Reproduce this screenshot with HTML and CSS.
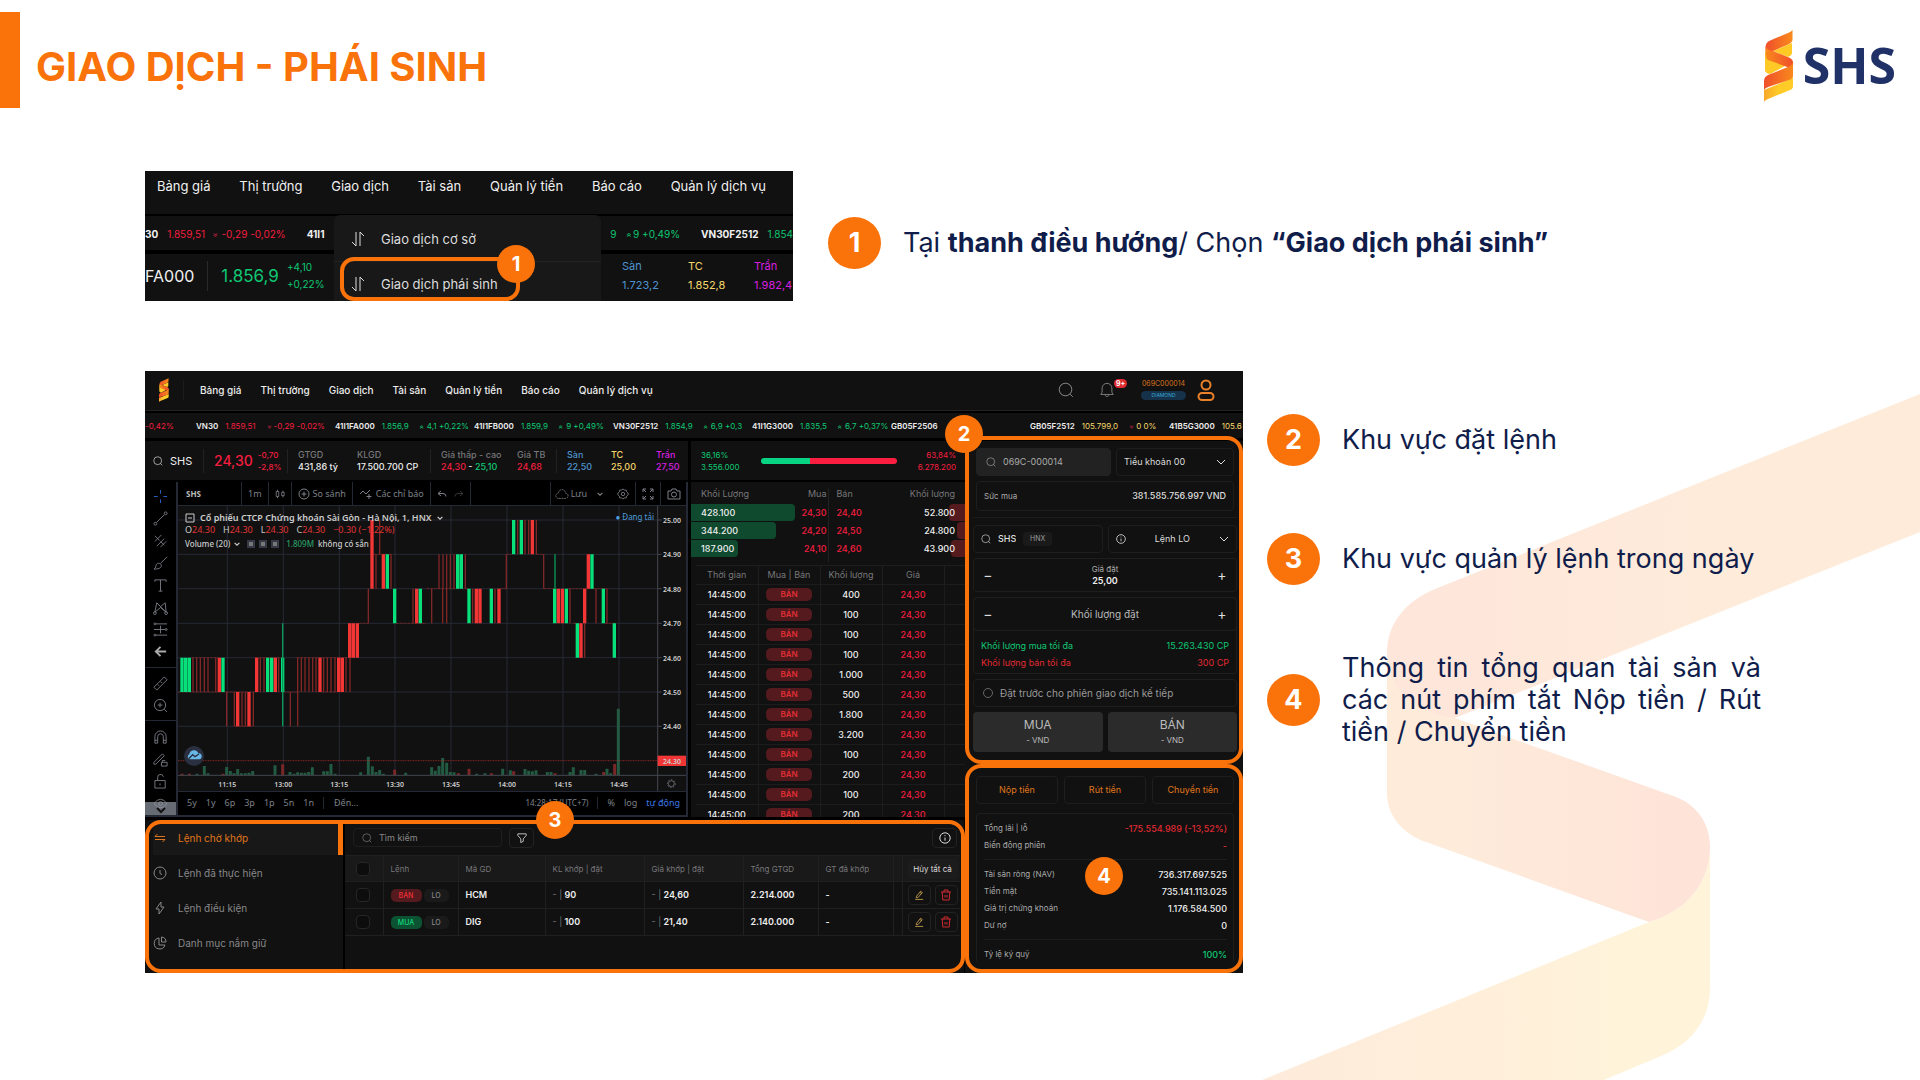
FILE: index.html
```html
<!DOCTYPE html>
<html lang="vi">
<head>
<meta charset="utf-8">
<meta name="viewport" content="width=device-width, initial-scale=1">
<title>Giao dịch - Phái sinh</title>
<link rel="stylesheet" href="styles.css">
</head>
<body>
<svg class="defs" aria-hidden="true">
  <linearGradient id="gA" x1="0" x2="1"><stop offset="0" stop-color="#f04e2b"/><stop offset="1" stop-color="#f98a1c"/></linearGradient>
  <linearGradient id="gB" x1="0" x2="1"><stop offset="0" stop-color="#f98a1c"/><stop offset="1" stop-color="#f04e2b"/></linearGradient>
  <linearGradient id="gC" x1="0" x2="1"><stop offset="0" stop-color="#f8a72a"/><stop offset=".5" stop-color="#ffcb26"/></linearGradient>
  <symbol id="ribbon" viewBox="0 0 30 72">
    <path fill="#ffc926" d="M9 21 28 13V23C28 25 26 26 24 27Z"/>
    <path fill="#ffc926" d="M1 22V40Q1 43 6 44L21 36Z"/>
    <path fill="url(#gA)" d="M28.500 0V10Q28 13 23 15L9 21Q5 24 2 22Q0 14 5 11L24 3Q27 2 28.500 0Z"/>
    <path fill="url(#gB)" d="M2 17Q3 20 9 21L26 28Q30 30 29 36Q28 38 26 38L4 30Q1 28 1.500 20Z"/>
    <path fill="url(#gC)" d="M0 72V60L29 48V56Q29 59 26 60L4 69Q1 70 0 72Z"/>
    <path fill="url(#gA)" d="M0 60V51Q0 47 4 45L24 37Q29 35 29 31V46Q29 49 25 50L4 57Q1 58 0 60Z"/>
  </symbol>
  <symbol id="search" viewBox="0 0 16 16"><circle cx="7.500" cy="7.500" r="6.300"/><path d="m12.200 12.200 2.600 2.600"/></symbol>
  <symbol id="chev" viewBox="0 0 10 10"><path d="m1 3 4 4 4-4"/></symbol>
  <symbol id="info" viewBox="0 0 12 12"><circle cx="6" cy="6" r="5.200"/><path d="M6 5.500v3.200M6 3.200v.9"/></symbol>
  <symbol id="swap" viewBox="0 0 14 16"><path d="M5 1v14L1 11M9 15V1l4 4"/></symbol>
  <symbol id="pen" viewBox="0 0 12 12"><path d="M3 7.500 8 1.500l2 1.600-5 5.700-2.300.5zM1.500 11.300h9.500M7 2.800l2 1.600"/></symbol>
  <symbol id="bin" viewBox="0 0 12 12"><path d="M1 3h10M4 3V1h4v2M2.200 3l.6 8h6.400l.6-8M5 6v2.500M7 6v2.500"/></symbol>
  <symbol id="gear" viewBox="0 0 14 14"><circle cx="7" cy="7" r="2"/><path d="m7 1 1.500 1.500 2.200-.2.500 2.100L13 6v2l-1.800 1.500-.5 2.200-2.200-.2L7 13l-1.500-1.500-2.200.2-.5-2.200L1 8V6l1.800-1.500.5-2.200 2.200.2z"/></symbol>
</svg>

<div class="slide">
  <svg class="backdrop" viewBox="1262 380 658 700" aria-hidden="true">
    <defs>
      <linearGradient id="b1" x1="0" x2="1"><stop offset=".05" stop-color="#fee6da"/><stop offset=".6" stop-color="#feebda"/></linearGradient>
      <linearGradient id="b2" x1="0" x2="1"><stop offset=".2" stop-color="#feebda"/><stop offset="1" stop-color="#fee3d8"/></linearGradient>
      <linearGradient id="b3" x1="0" x2="1"><stop offset="0" stop-color="#feebdb"/><stop offset=".6" stop-color="#fff0da"/><stop offset=".8" stop-color="#fff3da"/></linearGradient>
    </defs>
    <path fill="url(#b3)" d="M1262 1080 1649 922C1690 910 1710 880 1710 846V989C1710 1020 1690 1045 1661 1056L1604 1080Z"/>
    <path fill="url(#b2)" d="M1387 652V793C1387 816 1403 834 1426 842L1649 922C1690 910 1710 880 1710 846C1710 824 1697 805 1676 797L1455 718Z"/>
    <path fill="url(#b1)" d="M1920 394 1435 589C1408 600 1387 622 1387 652C1387 688 1412 712 1455 718L1920 532Z"/>
  </svg>

  <header class="head">
    <span class="head-bar"></span>
    <h1>GIAO DỊCH - PHÁI SINH</h1>
    <div class="brand"><svg viewBox="0 0 30 72"><use href="#ribbon"/></svg><span>SHS</span></div>
  </header>

  <section class="step-one">
    <div class="shot">
      <nav class="shot-nav"><a href="#">Bảng giá</a><a href="#">Thị trường</a><a href="#">Giao dịch</a><a href="#">Tài sản</a><a href="#">Quản lý tiền</a><a href="#">Báo cáo</a><a href="#">Quản lý dịch vụ</a></nav>
      <div class="shot-ticker">
        <div><b>30</b><span class="red">1.859,51</span><span class="red"><i>»</i> -0,29 -0,02%</span><b class="next">41I1</b></div>
        <div><span class="green">9</span><span class="green"><i class="up">»</i> 9 +0,49%</span><b class="next">VN30F2512</b><span class="green">1.854</span></div>
      </div>
      <div class="shot-quote">
        <strong>FA000</strong>
        <span class="last">1.856,9</span>
        <span class="two green"><span>+4,10</span><span>+0,22%</span></span>
        <span class="limits"><span class="two blue"><span>Sàn</span><span>1.723,2</span></span><span class="two yellow"><span>TC</span><span>1.852,8</span></span><span class="two violet"><span>Trần</span><span>1.982,4</span></span></span>
      </div>
      <div class="menu">
        <a href="#"><svg class="ic"><use href="#swap"/></svg>Giao dịch cơ sở</a>
        <a href="#"><svg class="ic"><use href="#swap"/></svg>Giao dịch phái sinh</a>
        <span class="frame"></span><span class="dot">1</span>
      </div>
    </div>
    <div class="note"><span class="num">1</span><p>Tại <b>thanh điều hướng</b>/ Chọn <b>“Giao dịch phái sinh”</b></p></div>
  </section>

  <section class="step-two">
    <div class="app">
      <div class="app-head">
        <svg class="app-logo" viewBox="0 0 30 72"><use href="#ribbon"/></svg>
        <nav><a href="#">Bảng giá</a><a href="#">Thị trường</a><a href="#">Giao dịch</a><a href="#">Tài sản</a><a href="#">Quản lý tiền</a><a href="#">Báo cáo</a><a href="#">Quản lý dịch vụ</a></nav>
        <div class="tools">
          <button class="plain" aria-label="Tìm"><svg class="ic s16"><use href="#search"/></svg></button>
          <button class="plain bell" aria-label="Thông báo"><svg class="ic s16" viewBox="0 0 16 18"><path d="M1 14h14l-1.500-2.500V7A5.500 5.500 0 0 0 8 1.500 5.500 5.500 0 0 0 2.500 7v4.500zM6 14.500c0 2.500 4 2.500 4 0"/></svg><em>9+</em></button>
          <span class="acct"><span>069C000014</span><small>DIAMOND</small></span>
          <svg class="user" viewBox="0 0 18 22"><circle cx="9" cy="6" r="4.500"/><rect x="1.500" y="14" width="15" height="7" rx="3.500"/></svg>
        </div>
      </div>

      <div class="ticker">
        <div class="red first">-0,42%</div>
        <div><b>VN30</b><span class="red">1.859,51</span><span class="red chg"><i>»</i>-0,29 -0,02%</span></div>
        <div><b>41I1FA000</b><span class="green">1.856,9</span><span class="green chg"><i class="up">»</i>4,1 +0,22%</span></div>
        <div><b>41I1FB000</b><span class="green">1.859,9</span><span class="green chg"><i class="up">»</i>9 +0,49%</span></div>
        <div><b>VN30F2512</b><span class="green">1.854,9</span><span class="green chg"><i class="up">»</i>6,9 +0,3</span></div>
        <div><b>41I1G3000</b><span class="green">1.835,5</span><span class="green chg"><i class="up">»</i>6,7 +0,37%</span></div>
        <div><b>GB05F2506</b></div>
        <div><b>GB05F2512</b><span class="yellow">105.799,0</span><span class="yellow chg"><i class="dn">»</i>0 0%</span></div>
        <div><b>41B5G3000</b><span class="yellow">105.6</span></div>
      </div>

      <div class="app-body">
        <div class="main">
          <div class="market">
            <div class="quote">
              <span class="sym"><svg class="ic s10"><use href="#search"/></svg>SHS</span>
              <span class="price red"><strong>24,30</strong><span class="two"><span>-0,70</span><span>-2,8%</span></span></span>
              <span class="two line"><span class="mute">GTGD</span><b>431,86 tỷ</b></span>
              <span class="two"><span class="mute">KLGD</span><b>17.500.700 CP</b></span>
              <span class="two line"><span class="mute">Giá thấp - cao</span><b><span class="red">24,30</span> - <span class="green">25,10</span></b></span>
              <span class="two"><span class="mute">Giá TB</span><b class="red">24,68</b></span>
              <span class="two line blue"><span>Sàn</span><span>22,50</span></span>
              <span class="two yellow"><span>TC</span><span>25,00</span></span>
              <span class="two violet"><span>Trần</span><span>27,50</span></span>
            </div>
            <div class="ratio">
              <span class="two green"><span>36,16%</span><span>3.556.000</span></span>
              <span class="bar"></span>
              <span class="two red end"><span>63,84%</span><span>6.278.200</span></span>
            </div>

            <div class="chart">
              <div class="draw">
                <div>
                  <svg viewBox="0 0 16 16" class="cross"><path d="M8 1v4M8 11v4M1 8h4M11 8h4"/></svg>
                  <svg viewBox="0 0 16 16"><circle cx="13.500" cy="2.500" r="1.500"/><circle cx="2.500" cy="13.500" r="1.500"/><path d="m4 12 8-8"/></svg>
                  <svg viewBox="0 0 16 16"><path d="M2 9 9 2M4 14l8-8M8 15l6-6M2 3l5 5M8 9l4 4"/></svg>
                  <svg viewBox="0 0 16 16"><path d="M1 15c3-1 1-5 4-6s6 3 2 5c-2 1-4 1-6 1ZM8 9l7-7"/></svg>
                  <svg viewBox="0 0 16 16"><path d="M2 4V2h12v2M8 2v12M6 14h4"/></svg>
                  <svg viewBox="0 0 16 16"><path d="M2 13 4 3l4 4 5-4 1 10-6-5zM4 3l10 10"/><circle cx="2" cy="14" r="1.500"/><circle cx="14" cy="14" r="1.500"/></svg>
                  <svg viewBox="0 0 16 16"><path d="M3 2h12M1 8h12M3 14h12M8 4v8"/><circle cx="2" cy="2" r="1"/><circle cx="14" cy="8" r="1"/><circle cx="2" cy="14" r="1"/></svg>
                  <svg viewBox="0 0 16 16" class="arrow"><path d="M14 8H3M8 3 3 8l5 5"/></svg>
                </div>
                <div>
                  <svg viewBox="0 0 16 16"><path d="m1 12 11-11 3 3L4 15zM5 9l1.500 1.500M8 6l1.500 1.500"/></svg>
                  <svg viewBox="0 0 16 16"><circle cx="7.500" cy="7.500" r="6"/><path d="m12 12 3 3M7.500 5v5M5 7.500h5"/></svg>
                </div>
                <div>
                  <svg viewBox="0 0 16 16"><path d="M2 14V7a6 6 0 0 1 12 0v7h-3V7a3 3 0 0 0-6 0v7zM2 11h3M11 11h3"/></svg>
                  <svg viewBox="0 0 16 16"><path d="m1 11 9-9 2 2-9 9H1zM9 11h6v4H9zM10 11V9h3"/></svg>
                  <svg viewBox="0 0 16 16"><path d="M2 7h11v8H2zM5 7V4a3 3 0 0 1 6-1M7.500 10v2"/></svg>
                  <svg viewBox="0 0 16 16"><path d="M1 8q7-9 14 0-7 9-14 0Z"/><circle cx="8" cy="8" r="2"/></svg>
                </div>
                <span class="more"><svg viewBox="0 0 10 10"><use href="#chev"/></svg></span>
              </div>
              <div class="pane">
                <div class="topbar">
                  <b>SHS</b><span>1m</span>
                  <span><svg class="ic s10" viewBox="0 0 12 12"><path d="M1.500 3h3v6h-3zM3 1v2M3 9v2M8 4h3v4H8zM9.500 2v2M9.500 8v2"/></svg></span>
                  <span><svg class="ic s12" viewBox="0 0 12 12"><circle cx="6" cy="6" r="5"/><path d="M6 3.500v5M3.500 6h5"/></svg>So sánh</span>
                  <span><svg class="ic s14" viewBox="0 0 14 12"><path d="m1 6 3-3 3 3 4-4M10 6v5M7.500 8.500h5"/></svg>Các chỉ báo</span>
                  <span class="undo"><svg class="ic s10" viewBox="0 0 10 10"><path d="M4 2 1 4.500 4 7M1 4.500h5q3 0 3 3"/></svg><svg class="ic s10 dim" viewBox="0 0 10 10"><path d="m6 2 3 2.500L6 7M9 4.500H4q-3 0-3 3"/></svg></span>
                  <span class="save"><svg class="ic s14" viewBox="0 0 16 12"><path stroke-dasharray="2 1" d="M4 11a3 3 0 0 1 0-6 4 4 0 0 1 8 0 3 3 0 0 1 0 6z"/></svg>Lưu<svg class="ic s6" viewBox="0 0 10 10"><use href="#chev"/></svg></span>
                  <span class="g"><svg class="ic s12" viewBox="0 0 14 14"><use href="#gear"/></svg></span>
                  <span><svg class="ic s12" viewBox="0 0 12 12"><path d="M1 4V1h3M8 1h3v3M11 8v3H8M4 11H1V8M1 1l3 3M11 1 8 4M11 11 8 8M1 11l3-3"/></svg></span>
                  <span><svg class="ic s14" viewBox="0 0 14 12"><path d="M1 3h3l1-2h4l1 2h3v8H1z"/><circle cx="7" cy="6.500" r="2.500"/></svg></span>
                </div>
                <div class="plot">
                  <svg viewBox="114 423 1524 855">
                    <path class="grid" d="M114 465H1553M114 568H1553M114 671H1553M114 775H1553M114 878H1553M114 981H1553M114 1084H1553M262 423V1231M430 423V1231M598 423V1231M765 423V1231M933 423V1231M1101 423V1231M1269 423V1231M1437 423V1231"/>
                    <path class="dash" d="M114 981H262M155 878H235M345 878H426M470 878H624M260 981H345M430 981H475M545 981H590M285 1084H340M657 775H685M769 775H858M702 568H756M860 671H948M976 671H986M1082 671H1100M1100 568H1116M1189 568H1212M1212 671H1245M1300 775H1312M1285 671H1345M1395 775H1425M1360 671H1400"/>
                    <path class="thin" d="M159 878v103M170 878v103M181 878v103M193 878v103M204 878v103M227 878v103M361 878v103M372 878v103M416 878v103M473 878v103M484 878v103M495 878v103M507 878v103M518 878v103M528 878v103M551 878v103M562 878v103M573 878v103M585 878v103M618 878v103M630 878v103M260 981v103M283 981v103M306 981v103M316 981v103M340 981v103M451 981v103M473 981v103M685 671v104M819 671v104M875 671v104M908 671v104M920 671v104M998 671v104M1065 671v104M1290 671v104M1368 671v104M1401 671v104M708 568v103M753 568v103M897 568v103M909 568v103M920 568v103M931 568v103M942 568v103M976 568v103M1099 568v103M1211 568v103M719 465v103M1133 465v103M1155 465v103M1166 465v103M1189 465v103M1334 775v103"/>
                    <path class="down" d="M238 878v103M350 878v103M406 878v103M540 878v103M596 878v103M607 878v103M293 981v103M327 981v103M629 775v103M640 775v103M652 775v103M696 465v206M730 568v103M830 671v104M1009 671v104M1020 671v104M1077 671v104M1255 671v104M1267 671v104M1334 671v104M1345 568v103M1177 465v103M1323 775v103"/>
                    <path class="rise" d="M126 878v103M137 878v103M148 878v103M249 878v103M383 878v103M395 878v103M428 878v103M764 671v104M841 671v104M987 671v104M1054 671v104M1244 671v104M1279 671v104M1390 671v104M742 568v103M953 568v103M964 568v103M1356 568v103M1121 465v103M1144 465v103M1312 775v103M1423 775v103"/>
                    <path class="wick" d="M428 775v309M1245 568v103"/>
                    <path class="vol" d="M171 1231v-5M193 1231v-28M204 1231v-6M260 1231v-25M271 1231v-13M282 1231v-6M293 1231v-19M304 1231v-6M316 1231v-6M327 1231v-8M338 1231v-13M405 1231v-30M450 1231v-10M462 1231v-5M473 1231v-9M484 1231v-8M495 1231v-8M506 1231v-10M517 1231v-24M551 1231v-12M562 1231v-12M573 1231v-34M585 1231v-5M662 1231v-9M685 1231v-56M697 1231v-27M708 1231v-10M719 1231v-16M730 1231v-5M797 1231v-8M875 1231v-24M886 1231v-14M897 1231v-28M908 1231v-52M920 1231v-38M931 1231v-10M942 1231v-9M1010 1231v-5M1035 1231v-6M1088 1231v-20M1111 1231v-15M1155 1231v-19M1166 1231v-14M1177 1231v-12M1188 1231v-15M1222 1231v-10M1233 1231v-10M1290 1231v-10M1300 1231v-24M1323 1231v-16M1334 1231v-16M1368 1231v-5M1401 1231v-20M1412 1231v-6M1435 1231v-200"/>
                    <path class="vol sell" d="M126 1231v-5M148 1231v-5M249 1231v-5M428 1231v-33M764 1231v-17M955 1231v-6M987 1231v-20M1054 1231v-6M1121 1231v-12M1245 1231v-6M1391 1231v-10M1424 1231v-34"/>
                    <path class="now" d="M114 1187H1553"/>
                    <path class="axis" d="M1553 423V1278M114 1231H1638M1553 465h12M1553 568h12M1553 671h12M1553 775h12M1553 878h12M1553 981h12M1553 1084h12"/>
                    <rect x="1553" y="1172" width="85" height="31" fill="#f23636"/>
                    <g class="lab"><text x="1569" y="474">25.00</text><text x="1569" y="577">24.90</text><text x="1569" y="680">24.80</text><text x="1569" y="784">24.70</text><text x="1569" y="887">24.60</text><text x="1569" y="990">24.50</text><text x="1569" y="1093">24.40</text><text x="1569" y="1196">24.30</text></g>
                    <g class="lab mid"><text x="262" y="1265">11:15</text><text x="430" y="1265">13:00</text><text x="598" y="1265">13:15</text><text x="765" y="1265">13:30</text><text x="933" y="1265">13:45</text><text x="1101" y="1265">14:00</text><text x="1269" y="1265">14:15</text><text x="1437" y="1265">14:45</text></g>
                    <g fill="none" stroke="#8a8d96" stroke-width="2"><circle cx="1594" cy="1256" r="9"/><circle cx="1594" cy="1256" r="12" stroke-dasharray="4 5"/></g>
                    <circle cx="162" cy="1173" r="30" fill="#2a3040"/><path class="cloud" d="M149 1183a8 8 0 0 1-1-15 14 14 0 0 1 27-3 9 9 0 0 1 2 18z"/><path d="m146 1181 12-12 7 6 12-8" stroke="#2a3040" stroke-width="4"/>
                  </svg>
                  <div class="legend">
                    <p class="name"><svg class="ic s10" viewBox="0 0 10 10"><path d="M1 1h8v8H1zM3 5h4"/></svg>Cổ phiếu CTCP Chứng khoán Sài Gòn - Hà Nội, 1, HNX <svg class="ic s6" viewBox="0 0 10 10"><use href="#chev"/></svg></p>
                    <p class="ohlc"><span>O<i>24.30</i></span><span>H<i>24.30</i></span><span>L<i>24.30</i></span><span>C<i>24.30</i></span><i>−0.30 (−1.22%)</i></p>
                    <p class="volume">Volume (20) <svg class="ic s6" viewBox="0 0 10 10"><use href="#chev"/></svg><u></u><u></u><u></u><span class="v">1.809M</span> không có sẵn</p>
                  </div>
                  <span class="loading">● Đang tải</span>
                </div>
                <div class="range"><span>5y</span><span>1y</span><span>6p</span><span>3p</span><span>1p</span><span>5n</span><span>1n</span><span class="to">Đến...</span><span class="clock">14:28:17 (UTC+7)</span><span class="pct">%</span><span>log</span><span class="auto">tự động</span></div>
              </div>
            </div>

            <div class="book">
              <div class="depth">
                <div class="dr dh"><span>Khối Lượng</span><span>Mua</span><span>Bán</span><span>Khối lượng</span></div>
                <div class="dr"><s class="bid" style="width:38%"></s><s class="ask" style="width:6%"></s><b>428.100</b><span class="red">24,30</span><span class="red">24,40</span><b>52.800</b></div>
                <div class="dr"><s class="bid" style="width:31%"></s><s class="ask" style="width:3%"></s><b>344.200</b><span class="red">24,20</span><span class="red">24,50</span><b>24.800</b></div>
                <div class="dr"><s class="bid" style="width:17%"></s><s class="ask" style="width:5%"></s><b>187.900</b><span class="red">24,10</span><span class="red">24,60</span><b>43.900</b></div>
              </div>
              <table class="trades">
                <thead><tr><th>Thời gian</th><th>Mua | Bán</th><th>Khối lượng</th><th>Giá</th><th></th></tr></thead>
                <tbody>
                <tr><td>14:45:00</td><td><span class="tag">BÁN</span></td><td>400</td><td>24,30</td><td></td></tr>
                <tr><td>14:45:00</td><td><span class="tag">BÁN</span></td><td>100</td><td>24,30</td><td></td></tr>
                <tr><td>14:45:00</td><td><span class="tag">BÁN</span></td><td>100</td><td>24,30</td><td></td></tr>
                <tr><td>14:45:00</td><td><span class="tag">BÁN</span></td><td>100</td><td>24,30</td><td></td></tr>
                <tr><td>14:45:00</td><td><span class="tag">BÁN</span></td><td>1.000</td><td>24,30</td><td></td></tr>
                <tr><td>14:45:00</td><td><span class="tag">BÁN</span></td><td>500</td><td>24,30</td><td></td></tr>
                <tr><td>14:45:00</td><td><span class="tag">BÁN</span></td><td>1.800</td><td>24,30</td><td></td></tr>
                <tr><td>14:45:00</td><td><span class="tag">BÁN</span></td><td>3.200</td><td>24,30</td><td></td></tr>
                <tr><td>14:45:00</td><td><span class="tag">BÁN</span></td><td>100</td><td>24,30</td><td></td></tr>
                <tr><td>14:45:00</td><td><span class="tag">BÁN</span></td><td>200</td><td>24,30</td><td></td></tr>
                <tr><td>14:45:00</td><td><span class="tag">BÁN</span></td><td>100</td><td>24,30</td><td></td></tr>
                <tr><td>14:45:00</td><td><span class="tag">BÁN</span></td><td>200</td><td>24,30</td><td></td></tr>
                </tbody>
              </table>
            </div>
          </div>

          <div class="orders">
            <nav class="side">
              <a href="#" class="on"><svg class="ic s12" viewBox="0 0 12 12"><path d="M11 4.500H1L3.500 2M1 7.500h10L8.500 10"/></svg>Lệnh chờ khớp</a>
              <a href="#"><svg class="ic s14" viewBox="0 0 14 14"><circle cx="7" cy="7" r="6"/><path d="M7 4v3.500l2 1"/></svg>Lệnh đã thực hiện</a>
              <a href="#"><svg class="ic s14" viewBox="0 0 14 14"><path d="M8 1 3 8h3v5l5-7H8z"/></svg>Lệnh điều kiện</a>
              <a href="#"><svg class="ic s14" viewBox="0 0 14 14"><path d="M6 2a5.500 5.500 0 1 0 6 7H6zM8.500 1v5h4.500a5 5 0 0 0-4.500-5Z"/></svg>Danh mục nắm giữ</a>
            </nav>
            <div class="list">
              <div class="bar-row">
                <label class="find"><svg class="ic s10"><use href="#search"/></svg><input type="text" placeholder="Tìm kiếm" aria-label="Tìm kiếm"></label>
                <button class="sq" aria-label="Lọc"><svg class="ic s10" viewBox="0 0 12 12"><path d="M1 1h10v2L7.500 7v3l-3 1.500V7L1 3z"/></svg></button>
                <button class="sq last-btn" aria-label="Thông tin"><svg class="ic s12"><use href="#info"/></svg></button>
              </div>
              <table>
                <colgroup><col class="c1"><col class="c2"><col class="c3"><col class="c4"><col class="c5"><col class="c6"><col class="c7"><col class="c8"><col class="c9"></colgroup>
                <thead><tr><th><input type="checkbox" aria-label="Chọn tất cả"></th><th>Lệnh</th><th>Mã GD</th><th>KL khớp | đặt</th><th>Giá khớp | đặt</th><th>Tổng GTGD</th><th>GT đã khớp</th><th></th><th class="act"><button class="all">Hủy tất cả</button></th></tr></thead>
                <tbody>
                <tr><td><input type="checkbox" aria-label="Chọn HCM"></td><td><span class="tag">BÁN</span><span class="tag lo">LO</span></td><td>HCM</td><td><i>- |</i> 90</td><td><i>- |</i> 24,60</td><td>2.214.000</td><td>-</td><td></td><td class="act"><div class="acts"><button class="sq edit" aria-label="Sửa"><svg class="ic s10"><use href="#pen"/></svg></button><button class="sq del" aria-label="Hủy"><svg class="ic s12"><use href="#bin"/></svg></button></div></td></tr>
                <tr><td><input type="checkbox" aria-label="Chọn DIG"></td><td><span class="tag buy">MUA</span><span class="tag lo">LO</span></td><td>DIG</td><td><i>- |</i> 100</td><td><i>- |</i> 21,40</td><td>2.140.000</td><td>-</td><td></td><td class="act"><div class="acts"><button class="sq edit" aria-label="Sửa"><svg class="ic s10"><use href="#pen"/></svg></button><button class="sq del" aria-label="Hủy"><svg class="ic s12"><use href="#bin"/></svg></button></div></td></tr>
                </tbody>
              </table>
            </div>
            <span class="frame"></span><span class="dot">3</span>
          </div>
        </div>

        <div class="panel">
          <form class="ticket">
            <div class="duo inset">
              <label class="box filled"><svg class="ic s10"><use href="#search"/></svg><input type="text" value="069C-000014" aria-label="Tài khoản"></label>
              <label class="box"><select aria-label="Tiểu khoản"><option>Tiểu khoản 00</option></select><svg class="ic s10"><use href="#chev"/></svg></label>
            </div>
            <div class="box inset power"><span>Sức mua</span><b>381.585.756.997 VND</b></div>
            <div class="duo rule">
              <label class="box"><svg class="ic s10"><use href="#search"/></svg><input class="code" type="text" value="SHS" aria-label="Mã"><span class="hnx">HNX</span></label>
              <label class="box"><svg class="ic s10"><use href="#info"/></svg><select class="mid" aria-label="Loại lệnh"><option>Lệnh LO</option></select><svg class="ic s10"><use href="#chev"/></svg></label>
            </div>
            <div class="box stepper"><button type="button">−</button><label>Giá đặt<input type="text" value="25,00"></label><button type="button">+</button></div>
            <div class="vol-box">
              <div class="box stepper"><button type="button">−</button><input class="qty" type="text" placeholder="Khối lượng đặt" aria-label="Khối lượng đặt"><button type="button">+</button></div>
              <p class="green"><span>Khối lượng mua tối đa</span><span>15.263.430 CP</span></p>
              <p class="crimson"><span>Khối lượng bán tối đa</span><span>300 CP</span></p>
            </div>
            <label class="box early"><input type="radio" name="early">Đặt trước cho phiên giao dịch kế tiếp</label>
            <div class="duo"><button type="button" class="trade">MUA<small>- VND</small></button><button type="button" class="trade">BÁN<small>- VND</small></button></div>
            <span class="frame"></span><span class="dot">2</span>
          </form>
          <div class="assets">
            <div class="trio"><button>Nộp tiền</button><button>Rút tiền</button><button>Chuyển tiền</button></div>
            <dl>
              <div><dt>Tổng lãi | lỗ</dt><dd class="crimson">-175.554.989 (-13,52%)</dd></div>
              <div><dt>Biến động phiên</dt><dd class="crimson">-</dd></div>
              <div class="split"><dt>Tài sản ròng (NAV)</dt><dd>736.317.697.525</dd></div>
              <div><dt>Tiền mặt</dt><dd>735.141.113.025</dd></div>
              <div><dt>Giá trị chứng khoán</dt><dd>1.176.584.500</dd></div>
              <div><dt>Dư nợ</dt><dd>0</dd></div>
              <div class="split"><dt>Tỷ lệ ký quỹ</dt><dd class="green">100%</dd></div>
            </dl>
            <span class="frame"></span><span class="dot">4</span>
          </div>
        </div>
      </div>
    </div>

    <div class="notes">
      <div class="note"><span class="num">2</span><p>Khu vực đặt lệnh</p></div>
      <div class="note"><span class="num">3</span><p>Khu vực quản lý lệnh trong ngày</p></div>
      <div class="note just"><span class="num">4</span><p>Thông tin tổng quan tài sản và các nút phím tắt Nộp tiền / Rút tiền / Chuyển tiền</p></div>
    </div>
  </section>
</div>
</body>
</html>
```
FILE: styles.css
```css
* { box-sizing: border-box; }
body { margin: 0; background: #fff; font-family: Inter, "Noto Sans", sans-serif; color: #101d4b; }
p, h1, dl, dd { margin: 0; }
a { color: inherit; text-decoration: none; }
button, input, select { font: inherit; color: inherit; background: none; border: 0; padding: 0; margin: 0; min-width: 0; }
i { font-style: normal; }
.defs { position: absolute; width: 0; height: 0; }
.slide { position: relative; min-height: 100vh; overflow: hidden; isolation: isolate; }
.backdrop { position: absolute; right: 0; bottom: 0; width: 658px; height: 700px; z-index: -1; }

.red { color: #f41d3f; }
.crimson { color: #e02a32; }
.green { color: #0fc873; }
.blue { color: #4f94d0; }
.yellow { color: #f5d76b; }
.violet { color: #d81fe0; }
.mute { color: #77777a; }
.ic { fill: none; stroke: currentColor; stroke-width: 1; flex: none; width: 14px; height: 16px; }
.ic.s6 { width: 6px; height: 6px; stroke-width: 2; }
.ic.s10 { width: 10px; height: 10px; }
.ic.s12 { width: 12px; height: 12px; }
.ic.s14 { width: 14px; height: 14px; }
.ic.s16 { width: 16px; height: 16px; }
.two { display: flex; flex-direction: column; }

/* title row */
.head { display: flex; padding-top: 12px; height: 120px; }
.head-bar { width: 20px; height: 96px; background: #fa720a; }
h1 { margin-left: 16px; font-size: 40px; line-height: 110px; font-weight: 700; color: #fa720a; }
.brand { display: flex; align-items: center; gap: 9px; height: 72px; margin: 18px 24px 0 auto; font: 700 50px/70px "Open Sans", sans-serif; color: #1f3166; }
.brand svg { width: 30px; height: 72px; }
.brand span { padding-bottom: 2px; }

/* callouts */
.note { display: flex; align-items: center; gap: 22px; font-size: 27px; line-height: 32px; }
.num, .dot { display: grid; place-items: center; flex: none; border-radius: 50%; background: #fa720a; color: #fff; font-weight: 700; }
.num { width: 53px; height: 52px; font-size: 27px; }
.dot { position: absolute; width: 38px; height: 38px; font-size: 20px; z-index: 3; }
.frame { position: absolute; border: 4px solid #fa720a; border-radius: 16px; pointer-events: none; z-index: 2; }
.just p { text-align: justify; }
.step-one, .step-two { display: grid; padding: 0 159px 0 145px; }
.step-one { grid-template-columns: 648fr 933fr; gap: 35px; margin-top: 51px; align-items: start; }
.step-one .note { margin-top: 46px; }
.step-two { grid-template-columns: 1098fr 494fr; gap: 24px; margin-top: 70px; }
.notes { display: flex; flex-direction: column; gap: 67px; padding-top: 43px; }

/* navigation close-up */
.shot { position: relative; overflow: hidden; background: #000; color: #f0f0f0; font-size: 13px; height: 130px; }
.shot-nav { display: flex; justify-content: space-between; padding: 0 27px 0 12px; height: 43px; line-height: 30px; background: #111; white-space: nowrap; }
.shot-ticker { display: flex; justify-content: space-between; margin-top: 2px; height: 34px; line-height: 36px; background: #111; font-size: 10px; white-space: nowrap; }
.shot-ticker div { display: flex; gap: 9px; }
.shot-ticker .next { margin-left: 12px; }
.shot-ticker i, .ticker i { display: inline-block; transform: rotate(90deg); color: #c02040; font-size: 8px; }
.shot-ticker i.up, .ticker i.up { transform: rotate(-90deg); color: #0fc873; }
.shot-quote { display: flex; align-items: center; margin-top: 4px; height: 47px; padding-bottom: 3px; background: #111; white-space: nowrap; overflow: hidden; }
.shot-quote strong { font-size: 16px; font-weight: 400; padding-right: 13px; border-right: 1px solid #2a2a2a; line-height: 30px; }
.shot-quote .last { font-size: 17px; color: #0fc873; padding: 0 8px 0 13px; }
.shot-quote .two { font-size: 10px; line-height: 17px; }
.limits { display: flex; margin-left: auto; flex: none; width: 171px; }
.limits .two { width: 66px; flex: none; font-size: 11px; line-height: 19px; }
.menu { position: absolute; left: 189px; top: 44px; width: 267px; height: 90px; background: #181818; border-radius: 6px 6px 0 0; }
.menu a { display: flex; align-items: center; gap: 16px; height: 46px; padding: 2px 0 0 17px; font-size: 13px; color: #ddd; }
.menu a + a { border-top: 1px solid #222; height: 42px; }
.menu .frame { left: 6px; top: 42px; width: 180px; height: 44px; border-radius: 14px; }
.menu .dot { left: 163px; top: 30px; }

/* application */
.app { background: #000; color: #eee; font-size: 9px; line-height: 12px; min-width: 0; align-self: start; }
.app-head { display: flex; align-items: center; height: 40px; padding: 0 28px 2px 12px; background: #111; border-bottom: 1px solid #222; }
.app-logo { width: 14px; height: 24px; }
.app-head nav { display: flex; gap: 19px; margin-left: 12px; padding-left: 16px; border-left: 1px solid #1c1c1c; font-size: 10px; line-height: 20px; font-weight: 500; white-space: nowrap; }
.tools { display: flex; align-items: center; margin-left: auto; color: #888; }
.plain { display: flex; position: relative; margin-right: 25px; }
.bell em { position: absolute; left: 15px; top: -3px; padding: 0 2px; border-radius: 5px; background: #e02a32; color: #fff; font: 700 7px/9px Inter, sans-serif; }
.bell { margin-right: 26px; }
.acct { display: flex; flex-direction: column; width: 45px; color: #d9711c; font-size: 7px; line-height: 10px; text-align: center; }
.acct small { border-radius: 5px; margin-top: 2px; background: #16324a; color: #3aa8d8; font-size: 5px; line-height: 9px; }
.user { width: 18px; height: 22px; margin-left: 11px; fill: none; stroke: #e9802a; stroke-width: 2; }
.ticker { display: grid; grid-template-columns: 51fr repeat(7, 139fr) 74fr; margin-top: 2px; height: 25px; line-height: 26px; background: #111; font-size: 8px; white-space: nowrap; }
.ticker div { display: flex; gap: 7px; min-width: 0; }
.ticker b { font-weight: 600; }
.ticker .chg { padding-left: 4px; }
.ticker .chg i { margin-right: 3px; font-size: 7px; }
.app-body { display: grid; grid-template-columns: 820fr 278fr; margin-top: 3px; }
.main { min-width: 0; }
.market { display: grid; grid-template-columns: 543fr 274fr; grid-template-rows: 39px 335px; gap: 2px 3px; }
.quote { display: grid; grid-template-columns: 58fr 84fr 70fr 73fr 87fr 39fr 55fr 45fr 32fr; align-items: center; background: #111; font-size: 9px; white-space: nowrap; }
.quote > * { min-width: 0; }
.quote .two > * { font-weight: 500; }
.quote .two.line { position: relative; padding-left: 11px; }
.quote .price, .quote .line { box-shadow: inset 1px 0 #222; }
.sym { display: flex; gap: 7px; align-items: center; padding-left: 8px; font-size: 11px; }
.price { display: flex; align-items: center; gap: 5px; padding-left: 11px; }
.price strong { font-size: 14px; font-weight: 500; }
.price .two { font-size: 8px; }
.ratio { display: flex; align-items: center; justify-content: space-between; padding: 0 9px 0 10px; background: #111; font-size: 8px; }
.end { text-align: right; }
.bar { width: 136px; height: 6px; border-radius: 3px; background: linear-gradient(90deg, #07d583 36%, #fb1e41 36%); }

.chart { display: grid; grid-template-columns: 32px minmax(0, 1fr); font-family: "Noto Sans", sans-serif; color: #7d8088; border-right: 2px solid #252936; border-bottom: 2px solid #252936; overflow: hidden; }
.draw { position: relative; border-right: 1px solid #252936; }
.draw div { display: flex; flex-direction: column; align-items: center; justify-content: space-around; height: 186px; padding: 3px 0 4px; border-bottom: 1px solid #252936; }
.draw div + div { height: 53px; padding: 4px 0; }
.draw div + div + div { height: 94px; padding: 5px 0 0; border: 0; }
.draw svg { width: 15px; height: 15px; fill: none; stroke: #777a82; }
.draw .cross { stroke: #2962c8; }
.draw .arrow { stroke: #aaa; stroke-width: 2; }
.more { position: absolute; left: 0; right: 0; bottom: -2px; height: 15px; background: #9aa0adaa; display: grid; place-items: center; }
.more svg { width: 10px; height: 10px; stroke: #111; stroke-width: 2; }
.pane { border-left: 1px solid #252936; }
.topbar { display: flex; height: 24px; line-height: 24px; border-bottom: 1px solid #252936; white-space: nowrap; }
.topbar > * { display: flex; align-items: center; gap: 3px; padding: 0 6px; border-right: 1px solid #252936; }
.topbar b { width: 64px; padding-left: 8px; font-size: 8px; color: #bbb; }
.topbar .undo { gap: 7px; }
.topbar .dim { opacity: .4; }
.topbar .save { margin-left: auto; gap: 2px; padding: 0 8px 0 4px; border: 0; border-left: 1px solid #252936; }
.topbar .save .s6 { margin-left: 8px; }
.topbar > :last-child { border: 0; padding-right: 5px; }
.plot { position: relative; background: #111; }
.plot > svg { display: block; width: 100%; height: auto; }
.plot path { fill: none; }
.plot .grid { stroke: #262a36; stroke-width: 3; }
.plot .dash { stroke: #8c2626; stroke-width: 2; stroke-dasharray: 8 3; }
.plot .thin { stroke: #802626; stroke-width: 4; }
.plot .down { stroke: #f23636; stroke-width: 10; }
.plot .rise { stroke: #08e07b; stroke-width: 10; }
.plot .wick { stroke: #079a57; stroke-width: 4; }
.plot .vol { stroke: #235a42; stroke-width: 9; }
.plot .sell { stroke: #7a2727; }
.plot .now { stroke: #c23030; stroke-width: 2; stroke-dasharray: 3 2; }
.plot .axis { stroke: #454750; stroke-width: 3; }
.plot .cloud { fill: #69b7e8; }
.lab { fill: #ccc; font: 600 21px "Noto Sans", sans-serif; }
.mid { text-anchor: middle; }
.legend { position: absolute; left: 7px; top: 6px; color: #ccc; white-space: nowrap; }
.legend p { display: flex; align-items: center; gap: 4px; height: 12px; }
.legend .name { font-size: 9px; font-weight: 600; gap: 5px; }
.legend .ohlc { gap: 8px; font-size: 9px; }
.legend .ohlc i { color: #e03434; }
.legend .volume { height: 16px; font-size: 8px; font-weight: 500; }
.legend u { width: 8px; height: 8px; border: 2px solid #353944; background: #777; }
.legend u:first-of-type { margin-left: 3px; }
.legend .v { color: #2a9c67; margin-left: 3px; }
.loading { position: absolute; right: 32px; top: 5px; color: #4c9ede; font-size: 8px; }
.range { display: flex; align-items: center; gap: 9px; height: 23px; padding: 0 6px 0 9px; border-top: 1px solid #252936; white-space: nowrap; }
.range .to { padding-left: 10px; border-left: 1px solid #252936; }
.range .clock { margin-left: auto; padding-right: 9px; border-right: 1px solid #252936; font-size: 8px; }
.range .auto { color: #3c78e8; }

.book { background: #111; overflow: hidden; }
.depth { position: relative; padding-top: 2px; height: 83px; }
.depth::after { content: ""; position: absolute; left: 50%; top: 6px; bottom: 3px; width: 1px; background: #222; }
.dr { position: relative; display: grid; grid-template-columns: 84fr 44fr 60fr 67fr; gap: 4px; height: 18px; line-height: 18px; padding: 0 10px; }
.dr > * { position: relative; font-weight: 500; }
.dr > :nth-last-child(3), .dr > :last-child { text-align: right; }
.dr > :nth-last-child(2) { padding-left: 6px; }
.dh { color: #77777a; height: 20px; line-height: 20px; }
.dh > * { font-weight: 400; }
.dr s { position: absolute; top: 0; height: 17px; background: #0f4a2e; border-radius: 0 4px 4px 0; }
.dr .bid { left: 0; }
.dr .ask { right: 0; background: #541a1d; border-radius: 4px 0 0 4px; }
table { border-collapse: collapse; table-layout: fixed; width: 100%; }
.trades { width: calc(100% - 5px); margin-left: 5px; text-align: center; }
.trades th { height: 19px; padding: 0; font-weight: 400; color: #77777a; border-top: 1px solid #1e1e1e; border-right: 1px solid #1e1e1e; width: 62px; }
.trades th:last-child { width: auto; }
.trades td { height: 20px; padding: 0; font-weight: 500; border: 1px solid #1c1c1c; border-left: 0; }
.trades td:nth-child(4) { color: #f41d3f; }
.trades th:last-child, .trades td:last-child { border-right: 0; border-bottom: 0; }
.tag { display: inline-block; width: 46px; height: 13px; line-height: 13px; border-radius: 5px; background: #541a1d; color: #f03038; font-size: 8px; font-weight: 500; text-align: center; vertical-align: middle; }

.orders { position: relative; display: grid; grid-template-columns: 198fr 619fr; gap: 2px; margin-top: 3px; height: 153px; padding-right: 1px; }
.side { background: #111; padding-left: 8px; }
.side a { display: flex; align-items: center; gap: 11px; height: 35px; font-size: 10px; color: #88888a; }
.side .on { color: #e0771c; background: #181818; border-right: 5px solid #fa720a; }
.side .s12 { margin: 0 1px; }
.list { background: #111; min-width: 0; padding-right: 4px; }
.bar-row { display: flex; align-items: center; gap: 7px; height: 35px; padding: 0 3px 0 8px; }
.find { display: flex; align-items: center; gap: 7px; width: 149px; height: 19px; padding: 0 8px; border: 1px solid #1e1e1e; border-radius: 4px; color: #888; }
.find input { width: 100%; }
input::placeholder { color: inherit; opacity: 1; }
.sq { display: grid; place-items: center; width: 25px; height: 20px; border: 1px solid #222; border-radius: 4px; color: #ddd; }
.last-btn { margin-left: auto; }
.list thead { background: #191919; }
.list th, .list td { height: 27px; padding: 0 7px; text-align: left; border: 1px solid #202020; border-left: 0; font-weight: 600; white-space: nowrap; }
.list th { height: 26px; font-weight: 400; font-size: 8px; color: #77777a; }
.list td i { color: #77777a; font-weight: 400; }
.c1 { width: 38px; } .c2 { width: 75px; } .c3 { width: 87px; } .c4, .c5 { width: 99px; } .c6, .c7 { width: 75px; } .c8 { width: 9px; }
.list td:first-child, .list th:first-child { padding: 0 0 0 11px; }
.list .act { padding: 0 2px 0 5px; border-right: 0; }
.list [type=checkbox] { appearance: none; display: block; width: 14px; height: 14px; border: 1px solid #262626; border-radius: 4px; background: #0d0d0d; }
.list .tag { width: 31px; font-size: 7px; }
.list .lo { width: 25px; margin-left: 2px; background: #1a1a1a; color: #88888a; }
.list .buy { background: #0c5333; color: #10d67c; }
.acts { display: flex; gap: 4px; }
.edit { color: #d3a850; } .del { color: #d02a32; }
.all { height: 20px; width: 50px; background: #1c1c1c; border-radius: 4px; color: #ddd; font-size: 8px; }
.orders .frame { inset: 0; }
.orders .dot { left: 391px; top: -19px; }

.panel { display: flex; flex-direction: column; background: #111; min-width: 0; }
.ticket, .assets { position: relative; }
.ticket { display: flex; flex-direction: column; gap: 5px; height: 323px; padding: 7px 6px 0 8px; color: #ddd; }
.ticket .frame { inset: -5px 0 0 0; }
.ticket .dot { left: -20px; top: -26px; }
.inset { margin: 0 3px; }
.duo { display: grid; grid-template-columns: 1fr 1fr; gap: 5px; }
.duo.inset { grid-template-columns: 135fr 118fr; }
.rule { margin-top: 9px; position: relative; }
.rule::before { content: ""; position: absolute; left: 0; right: 0; top: -8px; height: 1px; background: #1c1c1c; }
.box { display: flex; align-items: center; gap: 7px; height: 28px; padding: 0 7px; border: 1px solid #1e1e1e; border-radius: 4px; }
.filled { background: #222; padding-left: 9px; color: #aaa; border-color: #222; }
.box input, .box select { flex: 1; width: 100%; appearance: none; }
.box .mid { text-align: center; text-align-last: center; }
.power { justify-content: space-between; height: 30px; }
.power b { font-weight: 500; }
.power span { color: #aaa; font-size: 8px; }
.box .code { flex: 0 0 18px; font-weight: 500; }
.hnx { padding: 0 7px; line-height: 14px; border-radius: 4px; background: #1a1a1a; color: #999; font-size: 7px; }
.stepper { height: 34px; padding: 0 8px; font-size: 8px; }
.stepper button { font-size: 14px; line-height: 12px; width: 12px; }
.stepper label { flex: 1; display: flex; flex-direction: column; align-items: center; line-height: 11px; color: #aaa; }
.stepper input { text-align: center; color: #eee; flex: none; line-height: 11px; height: 11px; font-size: 9px; font-weight: 600; }
.stepper .qty { flex: 1; font-weight: 400; font-size: 10px; color: #bbb; height: 20px; }
.vol-box { border: 1px solid #1e1e1e; border-radius: 4px; height: 77px; }
.vol-box .box { margin: -1px; height: 34px; }
.vol-box p { display: flex; justify-content: space-between; padding: 0 7px; font-size: 9px; line-height: 17px; }
.vol-box p:nth-child(2) { margin-top: 7px; }
.early { color: #999; padding-left: 9px; font-size: 10px; white-space: nowrap; }
.box.early input { appearance: none; flex: none; width: 10px; height: 10px; border: 1px solid #666; border-radius: 50%; }
.trade { display: flex; flex-direction: column; align-items: center; justify-content: center; height: 40px; border-radius: 4px; background: #2b2b2b; font-size: 12px; line-height: 17px; color: #bbb; }
.trade small { font-size: 8px; line-height: 15px; }
.assets { flex: 1; padding: 12px 9px 0 11px; }
.assets .frame { inset: 0; }
.assets .dot { left: 120px; top: 93px; }
.trio { display: grid; grid-template-columns: 1fr 1fr 1fr; gap: 6px; }
.trio button { height: 28px; border: 1px solid #1e1e1e; border-radius: 4px; color: #e0771c; }
.assets dl { margin-top: 9px; padding: 6px 6px 0 7px; border: 1px solid #1e1e1e; border-bottom: 0; border-radius: 4px; }
.assets dl div { display: flex; justify-content: space-between; line-height: 17px; font-size: 9px; }
.assets dt { color: #aaa; font-size: 8px; }
.assets dd { font-weight: 500; }
.assets .split { border-top: 1px solid #1e1e1e; margin-top: 5px; padding-top: 6px; }
```
